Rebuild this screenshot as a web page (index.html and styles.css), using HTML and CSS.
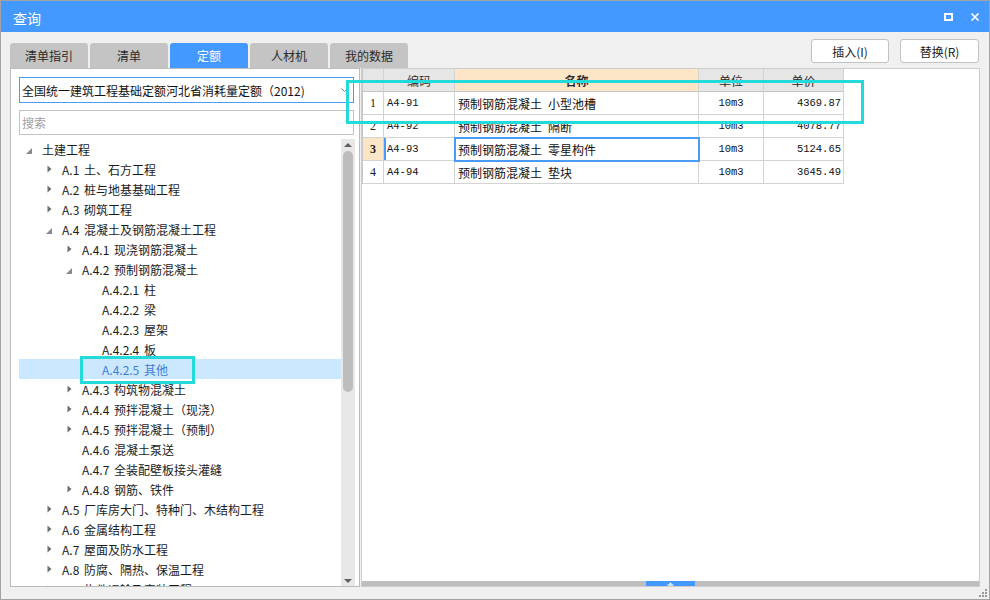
FILE: index.html
```html
<!DOCTYPE html>
<html lang="zh">
<head>
<meta charset="utf-8">
<title>查询</title>
<link rel="stylesheet" href="styles.css">
</head>
<body>
<div class="window">
  <div class="titlebar">
    <span class="title">查询</span>
    <div class="win-controls">
      <svg class="ctl" width="10" height="8" viewBox="0 0 10 8"><rect x="1" y="1" width="7" height="6" fill="none" stroke="#fff" stroke-width="2"/></svg>
      <svg class="ctl" width="10" height="8" viewBox="0 0 10 8"><path d="M1.5 0.5L8.5 7.5M8.5 0.5L1.5 7.5" stroke="#fff" stroke-width="1.6"/></svg>
    </div>
  </div>

  <div class="toolbar">
    <div class="tabs">
      <div class="tab">清单指引</div>
      <div class="tab">清单</div>
      <div class="tab active">定额</div>
      <div class="tab">人材机</div>
      <div class="tab">我的数据</div>
    </div>
    <div class="actions">
      <button class="btn">插入(I)</button>
      <button class="btn btn-wide">替换(R)</button>
    </div>
  </div>

  <div class="main">
    <div class="left-panel">
      <div class="select">
        <span class="select-text">全国统一建筑工程基础定额河北省消耗量定额（2012)</span>
        <svg class="select-arrow" width="7" height="4" viewBox="0 0 7 4"><path d="M0.5 0.5L3.5 3.5L6.5 0.5" fill="none" stroke="#777" stroke-width="1"/></svg>
      </div>
      <div class="search">搜索</div>
      <div class="tree-area">
        <div class="tree">
          <div class="node l0"><span class="tg"><svg class="exp" width="6" height="6" viewBox="0 0 6 6"><path d="M6 0V6H0Z"/></svg></span><span>土建工程</span></div>
          <div class="node l1"><span class="tg"><svg class="col" width="5" height="8" viewBox="0 0 5 8"><path d="M0.5 0.5L4.5 4L0.5 7.5Z"/></svg></span><span>A.1 土、石方工程</span></div>
          <div class="node l1"><span class="tg"><svg class="col" width="5" height="8" viewBox="0 0 5 8"><path d="M0.5 0.5L4.5 4L0.5 7.5Z"/></svg></span><span>A.2 桩与地基基础工程</span></div>
          <div class="node l1"><span class="tg"><svg class="col" width="5" height="8" viewBox="0 0 5 8"><path d="M0.5 0.5L4.5 4L0.5 7.5Z"/></svg></span><span>A.3 砌筑工程</span></div>
          <div class="node l1"><span class="tg"><svg class="exp" width="6" height="6" viewBox="0 0 6 6"><path d="M6 0V6H0Z"/></svg></span><span>A.4 混凝土及钢筋混凝土工程</span></div>
          <div class="node l2"><span class="tg"><svg class="col" width="5" height="8" viewBox="0 0 5 8"><path d="M0.5 0.5L4.5 4L0.5 7.5Z"/></svg></span><span>A.4.1 现浇钢筋混凝土</span></div>
          <div class="node l2"><span class="tg"><svg class="exp" width="6" height="6" viewBox="0 0 6 6"><path d="M6 0V6H0Z"/></svg></span><span>A.4.2 预制钢筋混凝土</span></div>
          <div class="node l3"><span class="tg"></span><span>A.4.2.1 柱</span></div>
          <div class="node l3"><span class="tg"></span><span>A.4.2.2 梁</span></div>
          <div class="node l3"><span class="tg"></span><span>A.4.2.3 屋架</span></div>
          <div class="node l3"><span class="tg"></span><span>A.4.2.4 板</span></div>
          <div class="node l3 selected"><span class="tg"></span><span>A.4.2.5 其他</span></div>
          <div class="node l2"><span class="tg"><svg class="col" width="5" height="8" viewBox="0 0 5 8"><path d="M0.5 0.5L4.5 4L0.5 7.5Z"/></svg></span><span>A.4.3 构筑物混凝土</span></div>
          <div class="node l2"><span class="tg"><svg class="col" width="5" height="8" viewBox="0 0 5 8"><path d="M0.5 0.5L4.5 4L0.5 7.5Z"/></svg></span><span>A.4.4 预拌混凝土（现浇）</span></div>
          <div class="node l2"><span class="tg"><svg class="col" width="5" height="8" viewBox="0 0 5 8"><path d="M0.5 0.5L4.5 4L0.5 7.5Z"/></svg></span><span>A.4.5 预拌混凝土（预制）</span></div>
          <div class="node l2"><span class="tg"></span><span>A.4.6 混凝土泵送</span></div>
          <div class="node l2"><span class="tg"></span><span>A.4.7 全装配壁板接头灌缝</span></div>
          <div class="node l2"><span class="tg"><svg class="col" width="5" height="8" viewBox="0 0 5 8"><path d="M0.5 0.5L4.5 4L0.5 7.5Z"/></svg></span><span>A.4.8 钢筋、铁件</span></div>
          <div class="node l1"><span class="tg"><svg class="col" width="5" height="8" viewBox="0 0 5 8"><path d="M0.5 0.5L4.5 4L0.5 7.5Z"/></svg></span><span>A.5 厂库房大门、特种门、木结构工程</span></div>
          <div class="node l1"><span class="tg"><svg class="col" width="5" height="8" viewBox="0 0 5 8"><path d="M0.5 0.5L4.5 4L0.5 7.5Z"/></svg></span><span>A.6 金属结构工程</span></div>
          <div class="node l1"><span class="tg"><svg class="col" width="5" height="8" viewBox="0 0 5 8"><path d="M0.5 0.5L4.5 4L0.5 7.5Z"/></svg></span><span>A.7 屋面及防水工程</span></div>
          <div class="node l1"><span class="tg"><svg class="col" width="5" height="8" viewBox="0 0 5 8"><path d="M0.5 0.5L4.5 4L0.5 7.5Z"/></svg></span><span>A.8 防腐、隔热、保温工程</span></div>
          <div class="node l1"><span class="tg"><svg class="col" width="5" height="8" viewBox="0 0 5 8"><path d="M0.5 0.5L4.5 4L0.5 7.5Z"/></svg></span><span>A.9 构件运输及安装工程</span></div>
        </div>
        <div class="vscroll">
          <div class="vbtn"><svg width="8" height="4" viewBox="0 0 8 4"><path d="M0 4L4 0L8 4Z" fill="#5f5f5f"/></svg></div>
          <div class="vthumb"></div>
          <div class="vspace"></div>
          <div class="vbtn"><svg width="8" height="4" viewBox="0 0 8 4"><path d="M0 0L8 0L4 4Z" fill="#5f5f5f"/></svg></div>
        </div>
      </div>
    </div>

    <div class="right-panel">
      <div class="grid">
        <div class="hc"></div>
        <div class="hc">编码</div>
        <div class="hc hc-sel">名称</div>
        <div class="hc">单位</div>
        <div class="hc">单价</div>

        <div class="c c-num">1</div>
        <div class="c c-code">A4-91</div>
        <div class="c c-name">预制钢筋混凝土&ensp;小型池槽</div>
        <div class="c c-unit">10m3</div>
        <div class="c c-price">4369.87</div>

        <div class="c c-num">2</div>
        <div class="c c-code">A4-92</div>
        <div class="c c-name">预制钢筋混凝土&ensp;隔断</div>
        <div class="c c-unit">10m3</div>
        <div class="c c-price">4078.77</div>

        <div class="c c-num cur">3</div>
        <div class="c c-code cur-code">A4-93</div>
        <div class="c c-name focus">预制钢筋混凝土&ensp;零星构件</div>
        <div class="c c-unit">10m3</div>
        <div class="c c-price">5124.65</div>

        <div class="c c-num">4</div>
        <div class="c c-code">A4-94</div>
        <div class="c c-name">预制钢筋混凝土&ensp;垫块</div>
        <div class="c c-unit">10m3</div>
        <div class="c c-price">3645.49</div>
      </div>
      <div class="rp-space"></div>
      <div class="hscroll">
        <div class="hthumb"><svg width="7" height="4" viewBox="0 0 7 4"><path d="M1.5 2.5L3.5 0.5L5.5 2.5Z" fill="#fff"/><rect x="0.5" y="2.5" width="6" height="1.2" fill="#fff"/></svg></div>
      </div>
    </div>
  </div>

  <div class="mark mark-row"></div>
  <div class="mark mark-node"></div>
  <svg class="grip" width="10" height="9" viewBox="0 0 10 9">
    <rect x="7" y="0" width="2" height="2" fill="#9a9a9a"/>
    <rect x="4" y="3" width="2" height="2" fill="#9a9a9a"/>
    <rect x="7" y="3" width="2" height="2" fill="#9a9a9a"/>
    <rect x="1" y="6" width="2" height="2" fill="#9a9a9a"/>
    <rect x="4" y="6" width="2" height="2" fill="#9a9a9a"/>
    <rect x="7" y="6" width="2" height="2" fill="#9a9a9a"/>
  </svg>
</div>
</body>
</html>
```

FILE: styles.css
```css
* { box-sizing: border-box; }
html, body { margin: 0; padding: 0; }
body {
  font-family: "Noto Sans CJK SC", "Noto Sans", sans-serif;
  font-size: 12px;
  color: #1e1e1e;
  background: #ffffff;
}

.window {
  position: relative;
  width: 990px;
  height: 600px;
  border: 1px solid #a3a3a3;
  background: #f0f0f0;
  display: flex;
  flex-direction: column;
  overflow: hidden;
}

/* title bar */
.titlebar {
  flex: none;
  height: 31px;
  background: #4399ff;
  color: #fff;
  display: flex;
  align-items: center;
  justify-content: space-between;
  padding: 2px 9px 0 12px;
}
.title { font-size: 14px; line-height: 16px; }
.win-controls { display: flex; align-items: center; gap: 16px; padding-bottom: 1px; }
.ctl { display: block; }

/* toolbar: tabs + buttons */
.toolbar {
  flex: none;
  height: 36px;
  display: flex;
  justify-content: space-between;
  padding: 0 10px 0 9px;
}
.tabs { display: flex; gap: 2px; align-self: flex-end; }
.tab {
  width: 78px;
  height: 25px;
  background: #c4c4c4;
  border-radius: 3px 3px 0 0;
  display: flex;
  align-items: center;
  justify-content: center;
  color: #2a2a2a;
  font-size: 12px;
}
.tab.active { background: #4399ff; color: #fff; }
.actions { display: flex; gap: 11px; padding-top: 7px; }
.btn {
  width: 78px;
  height: 24px;
  padding: 0;
  background: #fff;
  border: 1px solid #c2c2c2;
  border-radius: 3px;
  font-family: "Noto Sans CJK SC", "Noto Sans", sans-serif;
  font-size: 12px;
  color: #222;
}
.btn-wide { width: 79px; }

/* main area */
.main {
  flex: 1;
  min-height: 0;
  display: flex;
  gap: 1px;
  padding: 0 9px 12px 9px;
}

.left-panel {
  width: 350px;
  flex: none;
  background: #fff;
  border: 1px solid #bcbcbc;
  padding: 8px 4px 0 8px;
  display: flex;
  flex-direction: column;
  min-height: 0;
}
.select {
  position: relative;
  height: 26px;
  margin-right: 1px;
  border: 1px solid #4a9bf8;
  display: flex;
  align-items: center;
  padding-left: 2px;
  flex: none;
}
.select-text { color: #111; white-space: nowrap; }
.select-arrow { position: absolute; right: 5px; top: 10px; }
.search {
  flex: none;
  height: 25px;
  margin: 7px 1px 0 0;
  border: 1px solid #c3c3c3;
  color: #a0a0a0;
  display: flex;
  align-items: center;
  padding-left: 2px;
}

.tree-area {
  flex: 1;
  min-height: 0;
  margin-top: 4px;
  display: flex;
  overflow: hidden;
}
.tree { flex: 1; min-width: 0; overflow: hidden; }
.node {
  height: 20px;
  display: flex;
  align-items: center;
  white-space: nowrap;
  color: #1c1c1c;
  word-spacing: 2px;
}
.node.l1 { padding-left: 20px; }
.node.l2 { padding-left: 40px; }
.node.l3 { padding-left: 60px; }
.node.selected { background: #cce8ff; color: #3b7fd9; }
.tg {
  width: 23px;
  flex: none;
  height: 20px;
  display: flex;
  align-items: center;
}
.tg svg { display: block; fill: #6e6e6e; }
.tg .exp { margin-left: 7px; margin-top: 3px; fill: #8a8a8a; }
.tg .col { margin-left: 8px; }

.vscroll {
  width: 14px;
  flex: none;
  background: #e8e8e8;
  display: flex;
  flex-direction: column;
  align-items: center;
}
.vbtn { height: 11px; display: flex; align-items: center; justify-content: center; flex: none; }
.vthumb {
  width: 10px;
  height: 241px;
  margin-top: 1px;
  border-radius: 5px;
  background: #bdbdbd;
  flex: none;
}
.vspace { flex: 1; }

/* right panel */
.right-panel {
  flex: 1;
  min-width: 0;
  background: #fff;
  border: 1px solid #cdcdcd;
  display: flex;
  flex-direction: column;
}
.grid {
  display: grid;
  grid-template-columns: 21px 71px 244px 65px 80px;
  grid-auto-rows: 23px;
  width: 482px;
  border-left: 1px solid #c6c6c6;
  flex: none;
}
.hc, .c {
  border-right: 1px solid #d3d3d3;
  border-bottom: 1px solid #d3d3d3;
  display: flex;
  align-items: center;
  white-space: nowrap;
  overflow: hidden;
}
.hc {
  background: #e6e6e6;
  justify-content: center;
  color: #2a2a2a;
  border-bottom-color: #c4c4c4;
}
.hc-sel { background: #fde6c8; font-weight: bold; }
.c { color: #111; }
.c-num {
  justify-content: center;
  font-family: "Liberation Serif", serif;
  font-size: 12px;
  color: #222;
}
.c-num.cur { background: #fde6c8; font-weight: bold; }
.c-code {
  padding-left: 3px;
  font-family: "Liberation Mono", monospace;
  font-size: 10.5px;
}
.cur-code { box-shadow: inset 2px 0 0 #4a9bf8; }
.c-name { padding-left: 3px; font-size: 12px; }
.c-name.focus { outline: 2px solid #4a9bf8; outline-offset: -1px; position: relative; }
.c-unit {
  justify-content: center;
  font-family: "Liberation Mono", monospace;
  font-size: 10.5px;
}
.c-price {
  justify-content: flex-end;
  padding-right: 2px;
  font-family: "Liberation Mono", monospace;
  font-size: 10.5px;
}
.rp-space { flex: 1; }
.hscroll {
  flex: none;
  height: 5px;
  background: #bebebe;
  position: relative;
}
.hthumb {
  position: absolute;
  left: 284px;
  top: 0;
  width: 49px;
  height: 5px;
  background: #4399ff;
  display: flex;
  align-items: center;
  justify-content: center;
}
.hthumb svg { display: block; }

/* annotation overlays */
.mark {
  position: absolute;
  border: 3px solid #22dada;
  pointer-events: none;
}
.mark-row { left: 345px; top: 79px; width: 518px; height: 44px; }
.mark-node { left: 79px; top: 355px; width: 115px; height: 28px; }

.grip { position: absolute; right: 1px; bottom: 1px; }
```
